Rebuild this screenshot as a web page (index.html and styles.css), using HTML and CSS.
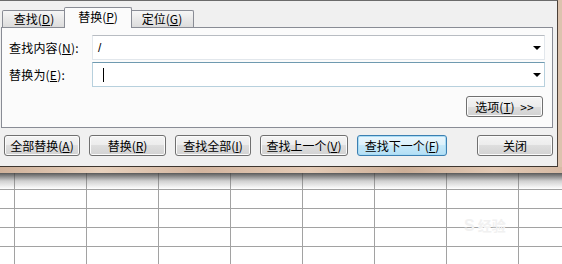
FILE: index.html
```html
<!DOCTYPE html>
<html>
<head>
    <title>查找和替换</title>
    <link rel="stylesheet" href="styles.css">
</head>
<body>
<div class="window">
    <div class="tabs">
        <div class="tab">查找(<u>D</u>)</div>
        <div class="tab active">替换(<u>P</u>)</div>
        <div class="tab">定位(<u>G</u>)</div>
    </div>
    <div class="panel">
        <div class="row">
            <div class="label">查找内容(<u>N</u>):</div>
            <div class="combo"><span class="value">/</span><span class="arrow"></span></div>
        </div>
        <div class="row">
            <div class="label">替换为(<u>E</u>):</div>
            <div class="combo focus"><span class="caret"></span><span class="arrow"></span></div>
        </div>
        <div class="options">
            <button type="button" class="btn opt">选项(<u>T</u>) &gt;&gt;</button>
        </div>
    </div>
    <div class="actions">
        <button type="button" class="btn w76">全部替换(<u>A</u>)</button>
        <button type="button" class="btn w77">替换(<u>R</u>)</button>
        <button type="button" class="btn w76">查找全部(<u>I</u>)</button>
        <button type="button" class="btn w88">查找上一个(<u>V</u>)</button>
        <button type="button" class="btn w89 default">查找下一个(<u>F</u>)</button>
        <button type="button" class="btn w76 close">关闭</button>
    </div>
</div>
<div class="frame"></div>
<div class="sheet">
    <div class="watermark">S<span>经验</span></div>
</div>
</body>
</html>
```

FILE: styles.css
```css
html, body {
    margin: 0;
    padding: 0;
    width: 562px;
    height: 264px;
    overflow: hidden;
    background-color: #dcc3ae;
    font-family: "Noto Sans CJK SC", "Liberation Sans", sans-serif;
    font-size: 12px;
    color: #000000;
}

u {
    text-decoration: underline;
    text-underline-offset: 1px;
}

.window {
    width: 557px;
    height: 165px;
    background-color: #f0f0f0;
    border-top: 1px solid #6b6b6b;
    border-right: 1px solid #4a4038;
    border-bottom: 1px solid #3f3730;
    display: flex;
    flex-direction: column;
}

.tabs {
    display: flex;
    align-items: flex-end;
    height: 26px;
    padding-left: 2px;
    position: relative;
    z-index: 1;
}

.tab {
    width: 62px;
    height: 16px;
    line-height: 16px;
    text-align: center;
    border: 1px solid #898c95;
    border-bottom: none;
    border-radius: 2px 2px 0 0;
    background: linear-gradient(#f6f6f6, #dcdcdc);
    margin-right: -1px;
}

.tab.active {
    width: 66px;
    height: 20px;
    line-height: 18px;
    margin-bottom: -1px;
    margin-left: -1px;
    margin-right: -2px;
    background: #fbfbfb;
    position: relative;
    z-index: 2;
}

.panel {
    width: 549px;
    height: 99px;
    margin-left: 1px;
    border: 1px solid #898c95;
    background-color: #fbfbfb;
    padding: 7px 0 0 6px;
    box-sizing: border-box;
    width: 552px;
    height: 101px;
    display: flex;
    flex-direction: column;
    gap: 2px;
}

.row {
    display: flex;
    align-items: center;
    height: 25px;
}

.label {
    width: 83px;
    padding-left: 1px;
    letter-spacing: 0.2px;
}

.combo {
    width: 451px;
    height: 23px;
    border: 1px solid #e2e7ec;
    border-top-color: #b8bcc2;
    background-color: #ffffff;
    display: flex;
    align-items: center;
    padding-left: 5px;
    box-sizing: content-box;
    width: 446px;
}

.combo.focus {
    border-color: #b7d0dd;
    border-top-color: #6f9ab0;
}

.value {
    flex: 1;
    font-family: "Liberation Sans", sans-serif;
    font-size: 12px;
}

.caret {
    width: 1px;
    height: 14px;
    margin-left: 5px;
    background-color: #000000;
}

.arrow {
    margin-left: auto;
    margin-right: 3px;
    width: 0;
    height: 0;
    border-left: 4px solid transparent;
    border-right: 4px solid transparent;
    border-top: 4px solid #000000;
}

.options {
    display: flex;
    justify-content: flex-end;
    padding-right: 9px;
    margin-top: 7px;
}

.btn {
    height: 21px;
    padding: 0;
    font-family: "Noto Sans CJK SC", "Liberation Sans", sans-serif;
    font-size: 12px;
    line-height: 17px;
    color: #000000;
    border: 1px solid #707070;
    border-radius: 3px;
    background: linear-gradient(#f4f4f4 0%, #ececec 50%, #dedede 50%, #d2d2d2 100%);
    box-shadow: inset 0 0 0 1px #fbfbfb;
    cursor: pointer;
}

.opt {
    width: 77px;
    height: 21px;
    word-spacing: 3px;
}

.actions {
    display: flex;
    gap: 9px;
    padding: 7px 4px 0 4px;
}

.w76 { width: 76px; }
.w77 { width: 77px; }
.w88 { width: 88px; }
.w89 { width: 90px; }

.default {
    border-color: #3c7fb1;
    background: linear-gradient(#eaf6fd 0%, #dcf1fb 50%, #c6e8f9 50%, #b3dff5 100%);
    box-shadow: inset 0 0 0 1px #a9dcf5;
}

.close {
    margin-left: auto;
}

.frame {
    height: 6px;
    background: linear-gradient(90deg, #cfb19a 0%, #e7d1bd 18%, #d3b59f 36%, #e4cbb6 55%, #cbae97 72%, #e2c9b4 88%, #d6baa4 100%);
}

.sheet {
    height: 91px;
    position: relative;
    background-color: #ffffff;
    background-image:
        linear-gradient(rgba(60, 60, 60, 0.85), rgba(120, 120, 120, 0.35) 8px, rgba(255, 255, 255, 0) 16px),
        linear-gradient(90deg, #a2a2a2 1px, transparent 1px),
        linear-gradient(#a2a2a2 1px, transparent 1px);
    background-size: 100% 16px, 72px 100%, 100% 19px;
    background-position: 0 0, 14px 0, 0 16px;
    background-repeat: no-repeat, repeat-x, repeat;
}

.watermark {
    position: absolute;
    left: 464px;
    top: 42px;
    font-family: "Liberation Sans", sans-serif;
    font-size: 16px;
    font-weight: bold;
    color: #f1f1f1;
}

.watermark span {
    font-family: "Noto Sans CJK SC", sans-serif;
    font-size: 14px;
    margin-left: 3px;
}
```
